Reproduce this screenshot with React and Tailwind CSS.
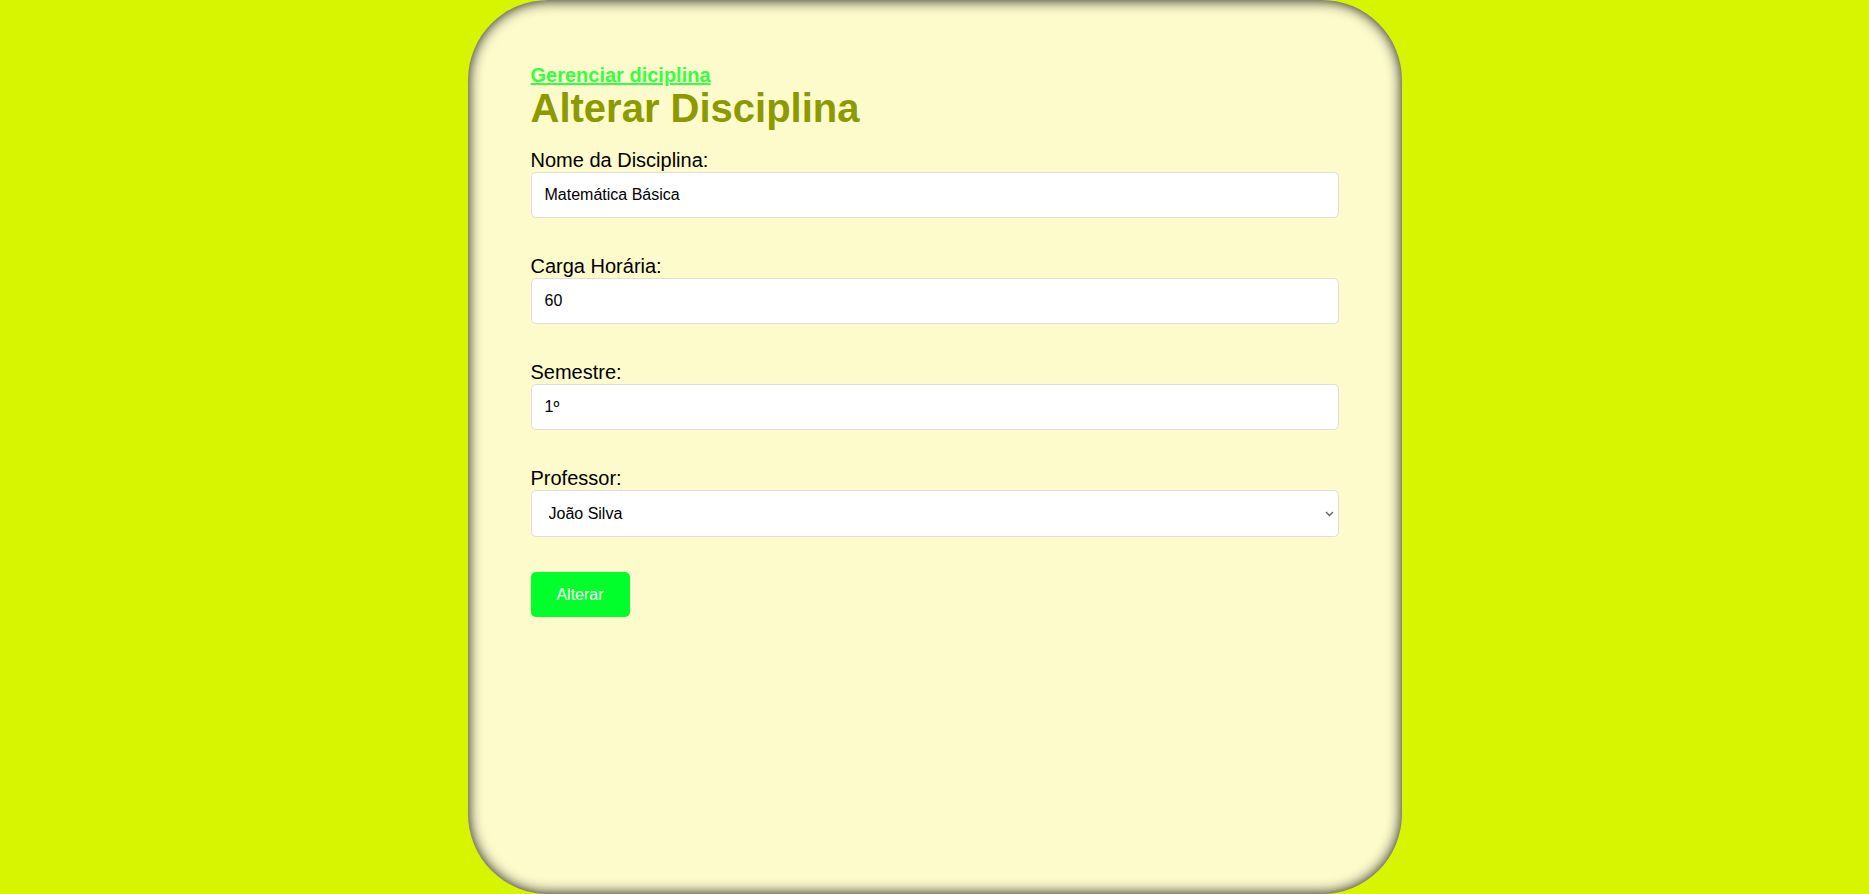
export default function App() {
  return (
    <div className="flex h-screen w-full justify-center bg-[#d8f500] font-['Liberation_Sans',Arial,sans-serif]">
      <div className="h-full w-[934px] rounded-[80px] bg-[#fdfbcb] px-[63px] pt-[64px] shadow-[inset_0_0_14px_rgba(0,0,0,0.95)]">
        <a href="#" className="block text-[20px] font-bold leading-[23px] text-[#33ff44] underline">
          Gerenciar diciplina
        </a>
        <h1 className="mb-[20px] text-[40px] font-bold leading-[42px] text-[#8c9a00]">Alterar Disciplina</h1>
        <form onSubmit={(e) => e.preventDefault()}>
          <Field label="Nome da Disciplina:" value="Matemática Básica" />
          <Field label="Carga Horária:" value="60" />
          <Field label="Semestre:" value="1º" />
          <div>
            <label className="block text-[20px] leading-[23px] text-black">Professor:</label>
            <div className="relative">
              <select
                defaultValue="joao"
                className="block h-[47px] w-full appearance-none rounded-[5px] border border-[#dddddd] bg-white px-[17px] text-[16px] text-black outline-none"
              >
                <option value="joao">João Silva</option>
                <option value="maria">Maria Souza</option>
              </select>
              <svg
                className="pointer-events-none absolute right-[5px] top-[21px]"
                width="9"
                height="6"
                viewBox="0 0 9 6"
                fill="none"
                stroke="#666"
                strokeWidth="1.4"
              >
                <path d="M1 1l3.5 3.5L8 1" />
              </svg>
            </div>
          </div>
          <button
            type="submit"
            className="mt-[35px] h-[45px] w-[99px] rounded-[5px] bg-[#00ff2b] text-[16px] text-white"
          >
            Alterar
          </button>
        </form>
      </div>
    </div>
  )
}

function Field({ label, value }) {
  return (
    <div className="mb-[37px]">
      <label className="block text-[20px] leading-[23px] text-black">{label}</label>
      <input
        type="text"
        defaultValue={value}
        className="block h-[46px] w-full rounded-[5px] border border-[#dddddd] bg-white px-[13px] text-[16px] text-black outline-none"
      />
    </div>
  )
}
